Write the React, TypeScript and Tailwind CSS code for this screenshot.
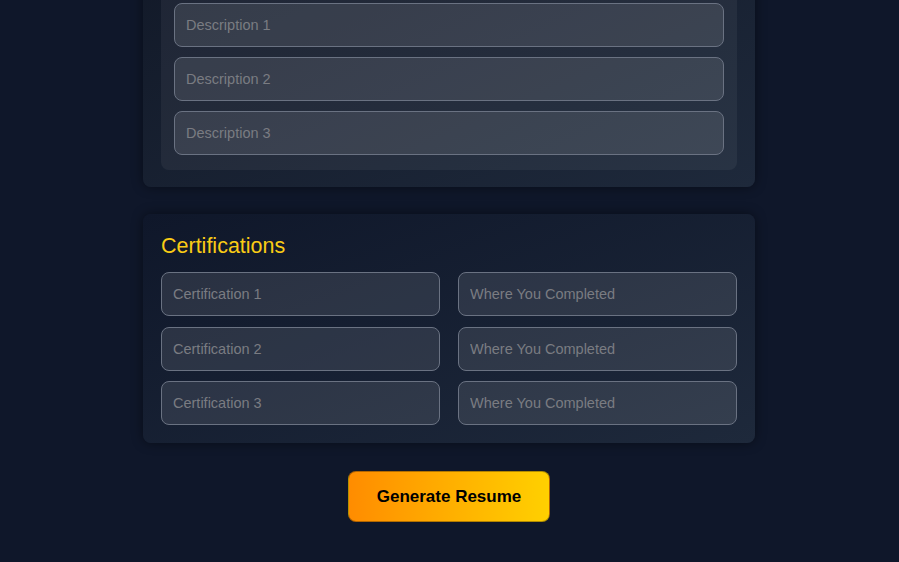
const inputCls =
  "w-full h-[44px] px-[11px] rounded-lg border border-gray-500 bg-white/10 text-[14.5px] text-gray-200 placeholder:text-[#7a7c82] outline-none";

const App = () => {
  const certs = [1, 2, 3];
  return (
    <div
      className="h-[562px] overflow-hidden bg-[#0f172a] pr-px"
      style={{ fontFamily: '"Liberation Sans", Arial, sans-serif' }}
    >
      <div className="w-[612px] mx-auto">
        {/* Projects card (scrolled, top part hidden) */}
        <div className="-mt-[82px] rounded-lg bg-gradient-to-br from-[#111827] to-[#1e293b] shadow-[0_0_12px_rgba(0,0,0,0.45)] px-[18px] pt-[18px] pb-[17px]">
          <div className="rounded-lg bg-white/5 px-[13px] pt-[13px] pb-[15px] flex flex-col gap-[10px]">
            <input className={inputCls} placeholder="Project Title" />
            <input className={inputCls} placeholder="Description 1" />
            <input className={inputCls} placeholder="Description 2" />
            <input className={inputCls} placeholder="Description 3" />
          </div>
        </div>

        {/* Certifications */}
        <div className="mt-[27px] rounded-lg bg-gradient-to-br from-[#0f172a] to-[#1e293b] shadow-[0_0_12px_rgba(0,0,0,0.45)] p-[18px]">
          <h2 className="text-[21.5px] leading-[28px] text-[#facc15] mb-[12px]">Certifications</h2>
          <div className="flex flex-col gap-[10.5px]">
            {certs.map((n) => (
              <div key={n} className="grid grid-cols-2 gap-[18px]">
                <input className={inputCls} placeholder={`Certification ${n}`} />
                <input className={inputCls} placeholder="Where You Completed" />
              </div>
            ))}
          </div>
        </div>

        <div className="flex justify-center mt-[28px]">
          <button className="w-[202px] h-[51px] rounded-lg border border-black/30 bg-gradient-to-r from-[#ff8c00] to-[#ffd000] text-black font-bold text-[17px]">
            Generate Resume
          </button>
        </div>
      </div>
    </div>
  );
};

export default App;
